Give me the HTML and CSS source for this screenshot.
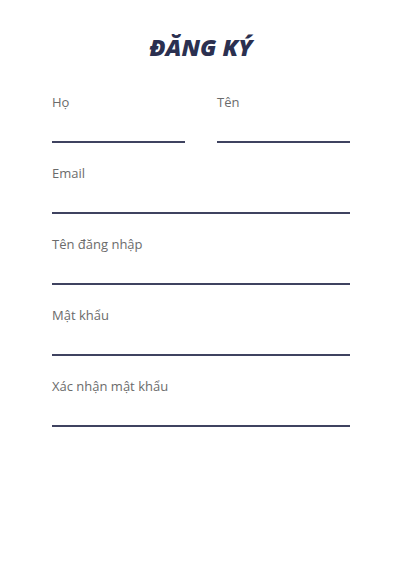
FILE: index.html
```html
<!DOCTYPE html>
<html lang="vi">
<head>
<meta charset="utf-8">
<title>Đăng ký</title>
<link rel="stylesheet" href="styles.css">
</head>
<body>
<form class="form">
  <h1 class="title">ĐĂNG KÝ</h1>
  <div class="row">
    <div class="field">
      <label class="label">Họ</label>
      <input class="input" type="text">
    </div>
    <div class="field">
      <label class="label">Tên</label>
      <input class="input" type="text">
    </div>
  </div>
  <div class="field">
    <label class="label">Email</label>
    <input class="input" type="email">
  </div>
  <div class="field">
    <label class="label">Tên đăng nhập</label>
    <input class="input" type="text">
  </div>
  <div class="field">
    <label class="label">Mật khẩu</label>
    <input class="input" type="password">
  </div>
  <div class="field">
    <label class="label">Xác nhận mật khẩu</label>
    <input class="input" type="password">
  </div>
</form>
</body>
</html>
```
FILE: styles.css
```css
html, body {
  margin: 0;
  padding: 0;
  background: #ffffff;
}
body {
  font-family: "Open Sans", "Noto Sans", sans-serif;
}
.form {
  width: 298px;
  margin: 0 0 0 calc(50% - 148px);
  padding-top: 32px;
  display: flex;
  flex-direction: column;
  gap: 21px;
}
.title {
  margin: 0 0 10px;
  text-align: center;
  font-size: 23.5px;
  line-height: 30px;
  font-weight: 800;
  font-style: italic;
  color: #2b3050;
  letter-spacing: 0;
}
.row {
  display: flex;
  gap: 32px;
}
.row .field {
  flex: 1;
}
.field {
  display: flex;
  flex-direction: column;
}
.label {
  font-size: 13px;
  line-height: 18px;
  color: #6b6b6b;
}
.input {
  height: 30px;
  border: none;
  border-bottom: 2px solid #3f4360;
  outline: none;
  padding: 0;
  margin: 0;
  background: transparent;
  font: inherit;
  width: 100%;
  box-sizing: content-box;
}
```
